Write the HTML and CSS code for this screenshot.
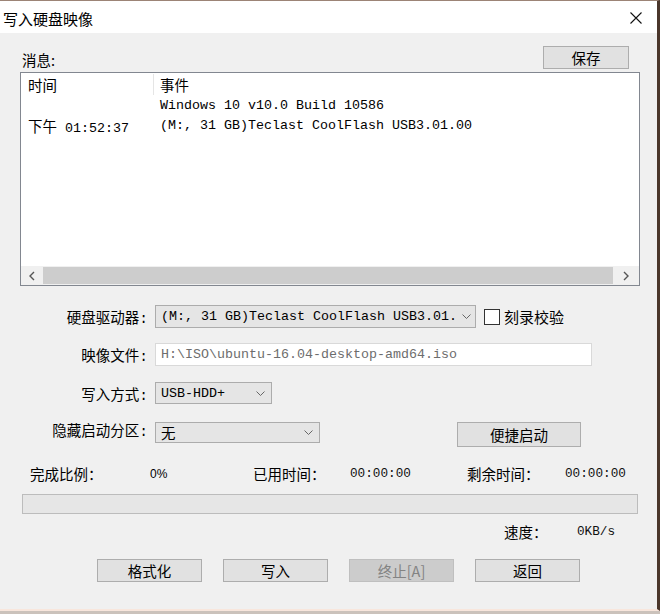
FILE: index.html
```html
<!DOCTYPE html>
<html>
  <head>
    <meta charset="utf-8">
    <title>写入硬盘映像</title>
    <link rel="stylesheet" href="styles.css">
  </head>
  <body>
    <div class="window">
      <div class="titlebar">
        <span class="title">写入硬盘映像</span>
        <svg class="close" width="12" height="12" viewBox="0 0 12 12"><path d="M0.5 0.5L11.5 11.5M11.5 0.5L0.5 11.5" stroke="#111" stroke-width="1.1" fill="none"/></svg>
      </div>
      <div class="content">
        <div class="msg-head">
          <span class="msg-label">消息:</span>
          <div class="btn btn-save">保存</div>
        </div>

        <div class="listview">
          <div class="lv-header">
            <div class="col-time">时间</div>
            <div class="col-event">事件</div>
          </div>
          <div class="lv-body">
            <div class="lv-row">
              <div class="col-time"></div>
              <div class="col-event">Windows 10 v10.0 Build 10586</div>
            </div>
            <div class="lv-row">
              <div class="col-time"><span class="zh">下午</span> 01:52:37</div>
              <div class="col-event">(M:, 31 GB)Teclast CoolFlash USB3.01.00</div>
            </div>
          </div>
          <div class="hscroll">
            <div class="sb-btn sb-left"><svg width="6" height="10" viewBox="0 0 6 10"><path d="M5 1L1 5L5 9" stroke="#555" stroke-width="1.4" fill="none"/></svg></div>
            <div class="sb-thumb"></div>
            <div class="sb-btn sb-right"><svg width="6" height="10" viewBox="0 0 6 10"><path d="M1 1L5 5L1 9" stroke="#555" stroke-width="1.4" fill="none"/></svg></div>
          </div>
        </div>

        <div class="form-row row-drive">
          <div class="label">硬盘驱动器:</div>
          <div class="select select-drive">
            <span class="select-text">(M:, 31 GB)Teclast CoolFlash USB3.01.</span>
            <span class="sliver"></span>
            <svg class="chev" width="9" height="5" viewBox="0 0 9 5"><path d="M0.5 0.5L4.5 4.5L8.5 0.5" stroke="#666" stroke-width="1" fill="none"/></svg>
          </div>
          <div class="checkbox"></div>
          <span class="check-label">刻录校验</span>
        </div>

        <div class="form-row row-file">
          <div class="label">映像文件:</div>
          <div class="textbox">H:\ISO\ubuntu-16.04-desktop-amd64.iso</div>
        </div>

        <div class="form-row row-mode">
          <div class="label">写入方式:</div>
          <div class="select select-mode">
            <span class="select-text">USB-HDD+</span>
            <svg class="chev" width="9" height="5" viewBox="0 0 9 5"><path d="M0.5 0.5L4.5 4.5L8.5 0.5" stroke="#666" stroke-width="1" fill="none"/></svg>
          </div>
        </div>

        <div class="form-row row-hide">
          <div class="label">隐藏启动分区:</div>
          <div class="select select-hide">
            <span class="select-text zh">无</span>
            <svg class="chev" width="9" height="5" viewBox="0 0 9 5"><path d="M0.5 0.5L4.5 4.5L8.5 0.5" stroke="#666" stroke-width="1" fill="none"/></svg>
          </div>
          <div class="btn btn-quick">便捷启动</div>
        </div>

        <div class="stats">
          <span class="zh">完成比例：</span>
          <span class="pct">0%</span>
          <span class="zh">已用时间：</span>
          <span class="num">00:00:00</span>
          <span class="zh">剩余时间：</span>
          <span class="num">00:00:00</span>
        </div>

        <div class="progress"></div>

        <div class="speed">
          <span class="zh">速度：</span>
          <span class="num">0KB/s</span>
        </div>

        <div class="actions">
          <div class="btn">格式化</div>
          <div class="btn">写入</div>
          <div class="btn btn-disabled">终止[A]</div>
          <div class="btn">返回</div>
        </div>
      </div>
    </div>
  </body>
</html>
```

FILE: styles.css
```css
body {
  margin: 0;
  background: #cbc2bb;
  font-family: "Noto Sans CJK SC", sans-serif;
  font-size: 14.5px;
  color: #000;
}
.window {
  width: 657px;
  height: 608px;
  border-top: 1px solid #9c8476;
  border-bottom: 2px solid #f8e6dc;
  border-right: 3px solid #4a362b;
  display: flex;
  flex-direction: column;
}
.titlebar {
  height: 32px;
  background: #fff;
  display: flex;
  align-items: center;
  justify-content: space-between;
}
.title {
  font-size: 15px;
  padding-left: 3px;
  margin-top: 2px;
}
.close {
  margin-right: 15px;
  margin-top: 2px;
}
.content {
  flex: 1;
  background: #f0f0f0;
  padding: 0 17px 0 20px;
}
.zh {
  font-family: "Noto Sans CJK SC", sans-serif;
}

/* message list */
.msg-head {
  margin-top: 13px;
  height: 23px;
  display: flex;
  align-items: center;
  justify-content: space-between;
}
.msg-label {
  margin-left: 2px;
  padding-top: 3px;
}
.btn {
  box-sizing: border-box;
  background: #e1e1e1;
  border: 1px solid #adadad;
  display: flex;
  align-items: center;
  justify-content: center;
  height: 23px;
  width: 105px;
}
.btn-save {
  width: 86px;
  margin-right: 11px;
}
.listview {
  margin-top: 3px;
  height: 214px;
  box-sizing: border-box;
  border: 1px solid #828790;
  background: #fff;
  display: flex;
  flex-direction: column;
}
.lv-header {
  height: 23px;
  display: flex;
  align-items: center;
}
.lv-header .col-time {
  border-right: 1px solid #e5e5e5;
  height: 21px;
  line-height: 21px;
}
.col-time {
  width: 125px;
  padding-left: 7px;
  flex-shrink: 0;
}
.col-event {
  padding-left: 6px;
  white-space: nowrap;
}
.lv-body {
  flex: 1;
  font-family: "Liberation Mono", "Noto Sans CJK SC", monospace;
  font-size: 13.33px;
}
.lv-row {
  height: 20px;
  line-height: 20px;
  display: flex;
}
.lv-row .col-time {
  width: 126px;
}
.lv-row .zh {
  font-size: 14.5px;
}
.hscroll {
  height: 19px;
  display: flex;
  background: #f0f0f0;
}
.sb-btn {
  display: flex;
  align-items: center;
  justify-content: center;
}
.sb-left {
  width: 22px;
}
.sb-right {
  width: 26px;
}
.sb-thumb {
  flex: 1;
  background: #cdcdcd;
  margin: 1px 0;
}

/* form */
.form-row {
  display: flex;
  align-items: center;
}
.label {
  width: 128px;
  text-align: right;
  margin-right: 7px;
  font-family: "Liberation Mono", "Noto Sans CJK SC", monospace;
}
.row-drive {
  margin-top: 19px;
  height: 23px;
}
.row-file {
  margin-top: 15px;
  height: 23px;
}
.row-mode {
  margin-top: 16px;
  height: 22px;
}
.row-hide {
  margin-top: 18px;
  height: 25px;
  align-items: flex-start;
}
.row-hide .label {
  line-height: 21px;
}
.select {
  box-sizing: border-box;
  height: 100%;
  background: #e5e5e5;
  border: 1px solid #acacac;
  display: flex;
  align-items: center;
  padding-left: 5px;
}
.select-text {
  flex: 1;
  white-space: nowrap;
  font-family: "Liberation Mono", "Noto Sans CJK SC", monospace;
  font-size: 13.33px;
}
.select-drive .select-text {
  flex: none;
}
.sliver {
  width: 1px;
  height: 5px;
  background: #555;
  margin: 0 0 2px 1px;
}
.select-drive .chev {
  margin-left: 4px;
}
.select-hide .select-text {
  font-family: "Noto Sans CJK SC", sans-serif;
  font-size: 14.5px;
}
.chev {
  margin: 0 6px 0 3px;
  flex-shrink: 0;
}
.select-drive {
  width: 321px;
}
.select-mode {
  width: 117px;
}
.select-hide {
  width: 165px;
  height: 21px;
}
.checkbox {
  width: 16px;
  height: 16px;
  box-sizing: border-box;
  border: 1px solid #333;
  background: #fff;
  margin-left: 8px;
}
.check-label {
  margin-left: 4px;
  font-size: 15px;
}
.textbox {
  box-sizing: border-box;
  width: 437px;
  height: 23px;
  background: #fff;
  border: 1px solid #d9d9d9;
  padding-left: 5px;
  line-height: 21px;
  color: #6d6d6d;
  font-family: "Liberation Mono", monospace;
  font-size: 13.33px;
}
.btn-quick {
  width: 124px;
  height: 25px;
  margin-left: 137px;
}

/* progress */
.stats {
  margin-top: 16px;
  height: 20px;
  padding-left: 10px;
  display: grid;
  grid-template-columns: 120px 103px 97px 117px 98px auto;
  align-items: center;
}
.pct {
  font-family: "Liberation Sans", sans-serif;
  font-size: 12px;
}
.num {
  font-family: "Liberation Mono", monospace;
  font-size: 12.7px;
  color: #111;
}
.progress {
  margin: 11px 2px 0 2px;
  height: 20px;
  box-sizing: border-box;
  background: #e6e6e6;
  border: 1px solid #bcbcbc;
}
.speed {
  margin-top: 7px;
  height: 20px;
  padding-left: 484px;
  display: grid;
  grid-template-columns: 73px auto;
  align-items: center;
}
.actions {
  margin-top: 18px;
  padding-left: 77px;
  display: flex;
  gap: 21px;
}
.btn-disabled {
  background: #cccccc;
  border-color: #bfbfbf;
  color: #838383;
}
```
